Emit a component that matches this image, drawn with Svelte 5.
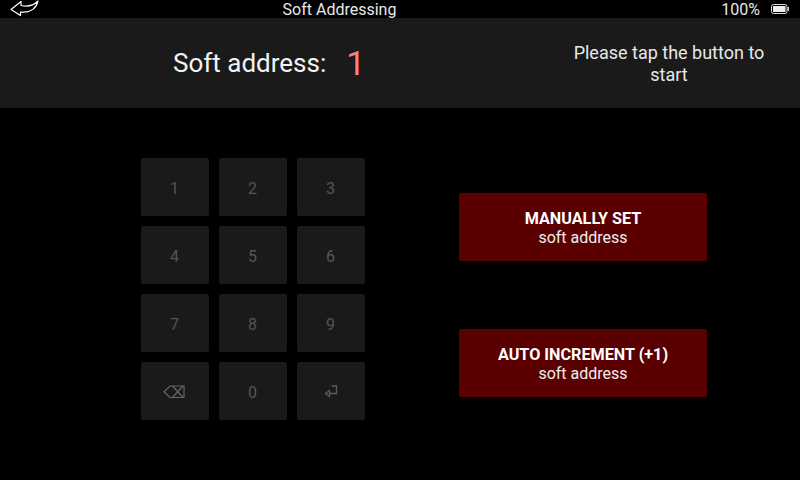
<script>
  const keys = ['1', '2', '3', '4', '5', '6', '7', '8', '9', 'del', '0', 'enter']
</script>

<div class="screen">
  <div class="status">
    <svg class="back" width="30" height="18" viewBox="0 0 30 18">
      <path d="M12 1.5 L2 9.5 L11.5 15.5 L11.5 12 C20 13 27 9.5 29 1 C25 5 19 7 12 5.5 Z" fill="none" stroke="#fff" stroke-width="1.2" stroke-linejoin="round" />
    </svg>
    <span class="title">Soft Addressing</span>
    <span class="pct">100%</span>
    <svg class="batt" width="18" height="10" viewBox="0 0 18 10">
      <rect x="0.5" y="0.5" width="15.5" height="9" rx="2" fill="none" stroke="#ddd" />
      <rect x="2" y="2" width="12.5" height="6" rx="0.5" fill="#eee" />
      <rect x="16.5" y="3" width="1.5" height="4" fill="#ccc" />
    </svg>
  </div>

  <div class="header">
    <div class="addr">
      <span class="label">Soft address:</span>
      <span class="value">1</span>
    </div>
    <div class="hint">Please tap the button to start</div>
  </div>

  <div class="main">
    <div class="keypad">
      {#each keys as k}
        <div class="key">
          {#if k === 'del'}
            <svg class="del" width="22" height="14" viewBox="0 0 22 14" fill="none" stroke="#666" stroke-width="1.2">
              <path d="M7 1 H21 V12.5 H7 L1 6.8 Z" />
              <path d="M9.5 1 L20 12.5 M20 1 L9.5 12.5" />
            </svg>
          {:else if k === 'enter'}
            <svg class="enter" width="14" height="14" viewBox="0 0 14 14" fill="none" stroke="#5c5c5c" stroke-width="1.3">
              <path d="M7.5 1 H12.5 V8.5 H5" />
              <path d="M5.5 5.5 L1.5 8.5 L5.5 11.5 Z" />
            </svg>
          {:else}
            <span class="digit">{k}</span>
          {/if}
        </div>
      {/each}
    </div>

    <div class="actions">
      <div class="action">
        <strong>MANUALLY SET</strong>
        <span>soft address</span>
      </div>
      <div class="action">
        <strong>AUTO INCREMENT (+1)</strong>
        <span>soft address</span>
      </div>
    </div>
  </div>
</div>

<style>
  :global(body) {
    margin: 0;
    background: #000;
  }
  .screen {
    width: 800px;
    height: 480px;
    background: #000;
    color: #fff;
    font-family: Roboto, "Liberation Sans", sans-serif;
    display: flex;
    flex-direction: column;
    overflow: hidden;
  }
  .status {
    height: 18px;
    position: relative;
    display: flex;
    align-items: center;
    justify-content: flex-end;
    font-size: 16px;
    color: #e8e8e8;
    padding-right: 11px;
  }
  .back {
    position: absolute;
    left: 9px;
    top: 0;
  }
  .title {
    position: absolute;
    left: 0;
    width: 679px;
    text-align: center;
    top: 0;
  }
  .pct {
    margin-right: 11px;
  }
  .header {
    height: 90px;
    background: #1a1a1a;
    display: flex;
    align-items: center;
    justify-content: space-between;
    padding: 0 31px 0 173px;
  }
  .addr {
    display: flex;
    align-items: center;
    gap: 20px;
  }
  .label {
    font-size: 26px;
    color: #f2f2f2;
  }
  .value {
    font-size: 34px;
    color: #ff8080;
  }
  .hint {
    width: 200px;
    text-align: center;
    font-size: 18px;
    line-height: 22px;
    color: #e8e8e8;
    padding-top: 2px;
  }
  .main {
    flex: 1;
    display: flex;
    padding-top: 50px;
  }
  .keypad {
    margin-left: 141px;
    display: grid;
    grid-template-columns: repeat(3, 68px);
    grid-auto-rows: 58px;
    gap: 10px;
    align-self: flex-start;
  }
  .key {
    background: #1a1a1a;
    border-radius: 2px;
    display: flex;
    align-items: center;
    justify-content: center;
    color: #555;
    font-size: 16px;
  }
  .digit {
    position: relative;
    top: 1px;
    left: -0.5px;
  }
  .del {
    margin: 2px 2px 0 0;
  }
  .enter {
    margin-top: 2px;
  }
  .actions {
    margin-left: 94px;
    padding-top: 35px;
    display: flex;
    flex-direction: column;
    gap: 68px;
  }
  .action {
    width: 248px;
    height: 68px;
    background: #5a0000;
    border-radius: 2px;
    display: flex;
    flex-direction: column;
    align-items: center;
    justify-content: center;
    font-size: 16px;
    line-height: 19px;
    color: #eee;
    padding-top: 2px;
    box-sizing: border-box;
  }
  .action strong {
    color: #fff;
    font-weight: 700;
    font-size: 16.2px;
  }
</style>
